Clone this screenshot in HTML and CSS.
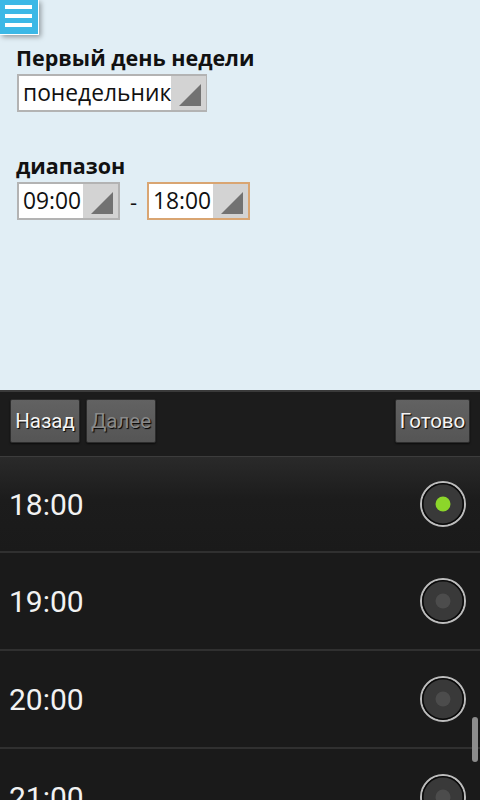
FILE: index.html
```html
<!DOCTYPE html>
<html lang="ru">
<head>
<meta charset="utf-8">
<title>Настройки</title>
<link rel="stylesheet" href="styles.css">
</head>
<body>
<div class="screen">
  <div class="top">
    <div class="menu-btn">
      <span class="bar"></span><span class="bar"></span><span class="bar"></span>
    </div>
    <div class="label first">Первый день недели</div>
    <div class="sel sel-day">
      <span class="sel-text">понедельник</span>
      <span class="sel-arrow"><svg width="35" height="34" viewBox="0 0 35 34"><polygon points="8,30 30,30 30,8" fill="#727272"/></svg></span>
    </div>
    <div class="label second">диапазон</div>
    <div class="range">
      <div class="sel sel-time">
        <span class="sel-text">09:00</span>
        <span class="sel-arrow"><svg width="35" height="34" viewBox="0 0 35 34"><polygon points="8,30 30,30 30,8" fill="#727272"/></svg></span>
      </div>
      <span class="dash">-</span>
      <div class="sel sel-time active">
        <span class="sel-text">18:00</span>
        <span class="sel-arrow"><svg width="35" height="34" viewBox="0 0 35 34"><polygon points="8,30 30,30 30,8" fill="#727272"/></svg></span>
      </div>
    </div>
  </div>
  <div class="picker">
    <div class="toolbar">
      <button class="tbtn">Назад</button>
      <button class="tbtn disabled">Далее</button>
      <span class="spacer"></span>
      <button class="tbtn done">Готово</button>
    </div>
    <div class="list">
      <div class="row firstrow">
        <span class="time">18:00</span>
        <svg class="radio" width="48" height="48" viewBox="0 0 48 48"><circle cx="24" cy="24" r="22" fill="#393939" stroke="#bdbdbd" stroke-width="2"/><circle cx="24" cy="24" r="20.2" fill="none" stroke="#0a0a0a" stroke-width="1.6"/><circle cx="24" cy="24" r="7.5" fill="#8cd62a"/></svg>
      </div>
      <div class="divider"></div>
      <div class="row">
        <span class="time">19:00</span>
        <svg class="radio" width="48" height="48" viewBox="0 0 48 48"><circle cx="24" cy="24" r="22" fill="#393939" stroke="#bdbdbd" stroke-width="2"/><circle cx="24" cy="24" r="20.2" fill="none" stroke="#0a0a0a" stroke-width="1.6"/><circle cx="24" cy="24" r="7.5" fill="#4c4c4c"/></svg>
      </div>
      <div class="divider"></div>
      <div class="row">
        <span class="time">20:00</span>
        <svg class="radio" width="48" height="48" viewBox="0 0 48 48"><circle cx="24" cy="24" r="22" fill="#393939" stroke="#bdbdbd" stroke-width="2"/><circle cx="24" cy="24" r="20.2" fill="none" stroke="#0a0a0a" stroke-width="1.6"/><circle cx="24" cy="24" r="7.5" fill="#4c4c4c"/></svg>
      </div>
      <div class="divider"></div>
      <div class="row">
        <span class="time">21:00</span>
        <svg class="radio" width="48" height="48" viewBox="0 0 48 48"><circle cx="24" cy="24" r="22" fill="#393939" stroke="#bdbdbd" stroke-width="2"/><circle cx="24" cy="24" r="20.2" fill="none" stroke="#0a0a0a" stroke-width="1.6"/><circle cx="24" cy="24" r="7.5" fill="#4c4c4c"/></svg>
      </div>
      <div class="scrollbar"></div>
    </div>
  </div>
</div>
</body>
</html>
```
FILE: styles.css
```css
html, body {
  margin: 0;
  padding: 0;
}
body {
  width: 480px;
  height: 800px;
  overflow: hidden;
  font-family: "Open Sans", "DejaVu Sans", sans-serif;
}
.screen {
  width: 480px;
  height: 800px;
  display: flex;
  flex-direction: column;
  overflow: hidden;
}
.top {
  position: relative;
  height: 390px;
  flex: 0 0 390px;
  background: #e1eef5;
  padding: 46px 0 0 16px;
  box-sizing: border-box;
}
.menu-btn {
  position: absolute;
  left: 0;
  top: 0;
  width: 39px;
  height: 35px;
  background: #3cb8e6;
  border-right: 1px solid #fff;
  border-bottom: 1px solid #fff;
  box-shadow: 2px 2px 5px rgba(0, 0, 0, 0.35);
  display: flex;
  flex-direction: column;
  gap: 5px;
  padding: 5px 0 0 5px;
  box-sizing: border-box;
}
.menu-btn .bar {
  display: block;
  width: 27px;
  height: 4px;
  background: #fff;
}
.label {
  font-weight: 700;
  font-size: 21.5px;
  line-height: 24px;
  color: #111;
}
.label.second {
  margin-top: 42px;
}
.sel {
  display: flex;
  height: 38px;
  box-sizing: border-box;
  border: 2px solid #b3b3b3;
  background: #fff;
}
.sel-day {
  width: 190px;
  margin: 4px 0 0 1px;
}
.sel-text {
  flex: 1;
  font-size: 22.8px;
  line-height: 34px;
  padding-left: 4px;
  color: #111;
  white-space: nowrap;
}
.sel-arrow {
  width: 35px;
  height: 34px;
  background: #d3d3d3;
  display: block;
}
.sel-arrow svg {
  display: block;
}
.range {
  display: flex;
  align-items: center;
  margin: 4px 0 0 1px;
}
.sel-time {
  width: 103px;
}
.sel-time.active {
  border-color: #d9a572;
}
.dash {
  width: 27px;
  text-align: center;
  font-size: 22px;
  color: #111;
  line-height: 34px;
}
.picker {
  flex: 1;
  background: #1a1a1a;
  display: flex;
  flex-direction: column;
}
.toolbar {
  height: 67px;
  flex: 0 0 67px;
  box-sizing: border-box;
  border-top: 2px solid #3a3a3a;
  border-bottom: 1px solid #3c3c3c;
  background: #1c1c1c;
  display: flex;
  align-items: flex-start;
  gap: 6px;
  padding: 7px 10px 0 10px;
}
.spacer {
  flex: 1;
}
.tbtn {
  height: 44px;
  width: 70px;
  padding: 0;
  border: 1px solid #2c2c2c;
  border-radius: 2px;
  background: linear-gradient(#626262, #555555);
  box-shadow: 0 1px 2px rgba(0, 0, 0, 0.6);
  font-family: Roboto, "Noto Sans", sans-serif;
  font-size: 20.5px;
  color: #f4f4f4;
  text-shadow: 1px 1px 1px #000;
  line-height: 42px;
}
.tbtn.disabled {
  color: #8a8a8a;
}
.tbtn.done {
  width: 75px;
}
.list {
  position: relative;
  flex: 1;
  overflow: hidden;
}
.row {
  height: 96px;
  display: flex;
  align-items: center;
  justify-content: space-between;
  padding: 0 13px 0 9px;
  background: #1a1a1a;
}
.row.firstrow {
  height: 94px;
  background: linear-gradient(#2a2a2a, #1c1c1c 45%, #1a1a1a);
}
.time {
  font-family: Roboto, "Noto Sans", sans-serif;
  font-size: 30px;
  color: #f2f2f2;
}
.radio {
  display: block;
}
.divider {
  height: 2px;
  background: #303030;
}
.scrollbar {
  position: absolute;
  right: 2px;
  top: 260px;
  width: 6px;
  height: 45px;
  border-radius: 3px;
  background: #8c8c8c;
}
```
